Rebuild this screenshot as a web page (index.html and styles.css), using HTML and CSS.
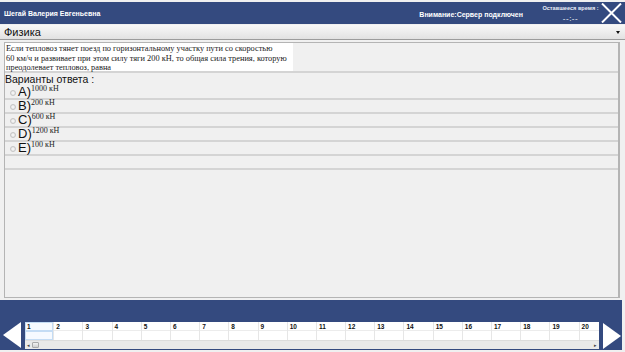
FILE: index.html
```html
<!DOCTYPE html>
<html lang="ru">
<head>
    <meta charset="UTF-8">
    <meta name="viewport" content="width=device-width, initial-scale=1.0">
    <title>Тестирование</title>
    <link rel="stylesheet" href="styles.css">
</head>
<body>
    <div class="app">
        <header class="topbar">
            <div class="user">Шегай Валерия Евгеньевна</div>
            <div class="status">Внимание:Сервер подключен</div>
            <div class="timer">
                <div class="timer-label">Оставшееся время :</div>
                <div class="timer-value">--:--</div>
            </div>
            <button class="close" title="Закрыть">
                <svg width="21" height="20" viewBox="0 0 21 20">
                    <path d="M1 0.5 L20 19.5 M20 0.5 L1 19.5" stroke="#fff" stroke-width="2" fill="none"/>
                </svg>
            </button>
        </header>

        <div class="subject">
            <span>Физика</span>
            <span class="caret"></span>
        </div>

        <main class="panel">
            <div class="question">
                <div class="question-text">Если тепловоз тянет поезд по горизонтальному участку пути со скоростью<br>60 км/ч и развивает при этом силу тяги 200 кН, то общая сила трения, которую<br>преодолевает тепловоз, равна</div>
            </div>
            <div class="answers-title">Варианты ответа :</div>
            <div class="option"><span class="radio"></span><span class="letter">A)</span><sup>1000 кН</sup></div>
            <div class="option"><span class="radio"></span><span class="letter">B)</span><sup>200 кН</sup></div>
            <div class="option"><span class="radio"></span><span class="letter">C)</span><sup>600 кН</sup></div>
            <div class="option"><span class="radio"></span><span class="letter">D)</span><sup>1200 кН</sup></div>
            <div class="option"><span class="radio"></span><span class="letter">E)</span><sup>100 кН</sup></div>
            <div class="option"></div>
        </main>

        <footer class="nav">
            <div class="nav-band"></div>
            <div class="nav-row">
                <button class="arrow prev">
                    <svg width="24" height="30" viewBox="0 0 24 30"><polygon points="3,15 21,2 21,28" fill="#fff"/></svg>
                </button>
                <div class="grid">
                    <div class="cells"></div>
                    <div class="hscroll">
                        <span class="sarrow">&#9666;</span>
                        <span class="thumb"></span>
                        <span class="sarrow right">&#9656;</span>
                    </div>
                </div>
                <button class="arrow next">
                    <svg width="22" height="30" viewBox="0 0 22 30"><polygon points="21,14 3,1 3,27" fill="#fff"/></svg>
                </button>
            </div>
        </footer>
    </div>

    <script>
        const cells = document.querySelector(".cells");
        for (let i = 1; i <= 20; i++) {
            let col = document.createElement("div");
            col.classList.add("cell");
            if (i === 1) col.classList.add("active");
            col.innerHTML = '<div class="num">' + i + '</div><div class="mark"></div>';
            cells.appendChild(col);
        }
    </script>
</body>
</html>
```

FILE: styles.css
```css
* {
    box-sizing: border-box;
    margin: 0;
    padding: 0;
}
body {
    width: 625px;
    height: 352px;
    overflow: hidden;
    background-color: #f0f0f0;
    font-family: "Liberation Sans", Arial, sans-serif;
}
.app {
    display: flex;
    flex-direction: column;
    height: 352px;
    padding: 2px 0;
}
.topbar {
    display: flex;
    align-items: center;
    height: 22px;
    background-color: #344a7f;
    color: #fff;
    font-weight: bold;
    font-size: 7px;
}
.user {
    flex: 1;
    padding-left: 4px;
}
.status {
    margin-right: 17px;
    padding-top: 2px;
}
.timer {
    width: 61px;
    align-self: stretch;
    text-align: center;
    white-space: nowrap;
    font-size: 5.6px;
    color: #e8ecf5;
}
.timer-label {
    margin-top: 3px;
}
.timer-value {
    margin-top: 3px;
    font-size: 8px;
    font-weight: normal;
    letter-spacing: 0.5px;
    color: #fff;
}
.close {
    width: 21px;
    height: 20px;
    margin: 0 3px 0 0;
    border: none;
    background: none;
    display: flex;
}
.subject {
    display: flex;
    align-items: center;
    justify-content: space-between;
    height: 15px;
    margin-top: 1px;
    padding: 0 5px 0 4px;
    background: linear-gradient(#f8f8f8, #e2e2e2);
    border-bottom: 1px solid #9c9c9c;
    font-size: 11px;
    color: #111;
}
.caret {
    border-left: 2px solid transparent;
    border-right: 2px solid transparent;
    border-top: 3px solid #111;
}
.panel {
    flex: 1;
    margin: 2px 5px 2px 4px;
    border: 1px solid #b4b4b4;
    border-right-width: 2px;
    background-color: #f0f0f0;
}
.question {
    height: 30px;
    border-bottom: 2px solid #d4d4d4;
}
.question-text {
    width: 288px;
    height: 28px;
    background-color: #fff;
    padding: 1px 0 0 1px;
    white-space: nowrap;
    font-family: "Liberation Serif", "Times New Roman", serif;
    font-size: 8.35px;
    line-height: 9.5px;
    color: #222;
}
.answers-title {
    height: 13px;
    padding: 1px 0 0 0;
    font-size: 10.5px;
    line-height: 11px;
    color: #111;
}
.option {
    display: flex;
    align-items: flex-start;
    height: 14px;
    border-bottom: 2px solid #d4d4d4;
}
.radio {
    width: 6px;
    height: 6px;
    margin: 4px 2px 0 5px;
    border: 1px solid #c4c4c4;
    border-radius: 50%;
    background: radial-gradient(#fafafa, #dedede);
}
.letter {
    font-size: 13px;
    line-height: 12px;
    margin-top: 0;
    color: #111;
}
.option sup {
    font-family: "Liberation Serif", "Times New Roman", serif;
    font-size: 8px;
    line-height: 8px;
    margin-top: -1px;
    color: #222;
}
.nav {
    height: 50px;
    margin-right: 3px;
    background-color: #344a7f;
}
.nav-band {
    height: 20px;
}
.nav-row {
    display: flex;
    height: 30px;
}
.arrow {
    border: none;
    background: none;
    display: flex;
}
.prev {
    width: 25px;
}
.next {
    width: 22px;
    margin-left: 1px;
    padding-top: 2px;
}
.grid {
    width: 574px;
    margin-top: 2px;
    height: 27px;
    background-color: #fff;
    overflow: hidden;
    display: flex;
    flex-direction: column;
}
.cells {
    display: flex;
    height: 18px;
}
.cell {
    flex: 0 0 29.2px;
    border-right: 1px solid #e6e6e6;
}
.cell .num {
    height: 9px;
    padding-left: 2px;
    font-size: 6.5px;
    font-weight: bold;
    line-height: 9px;
    color: #111;
    border-bottom: 1px solid #ececec;
}
.cell .mark {
    height: 9px;
}
.cell.active .num,
.cell.active .mark {
    border: 1px solid #c4dcf4;
    background-color: #f6faff;
}
.cell.active .num {
    padding-left: 1px;
    line-height: 7px;
}
.hscroll {
    flex: 1;
    display: flex;
    align-items: center;
    background-color: #e9e9e9;
    border-top: 1px solid #dcdcdc;
    padding: 0 2px;
    font-size: 5px;
    color: #444;
}
.thumb {
    width: 7px;
    height: 6px;
    margin-left: 2px;
    border: 1px solid #a9a9a9;
    border-radius: 1px;
    background: linear-gradient(#f2f2f2, #cfcfcf);
}
.sarrow.right {
    margin-left: auto;
}
```
